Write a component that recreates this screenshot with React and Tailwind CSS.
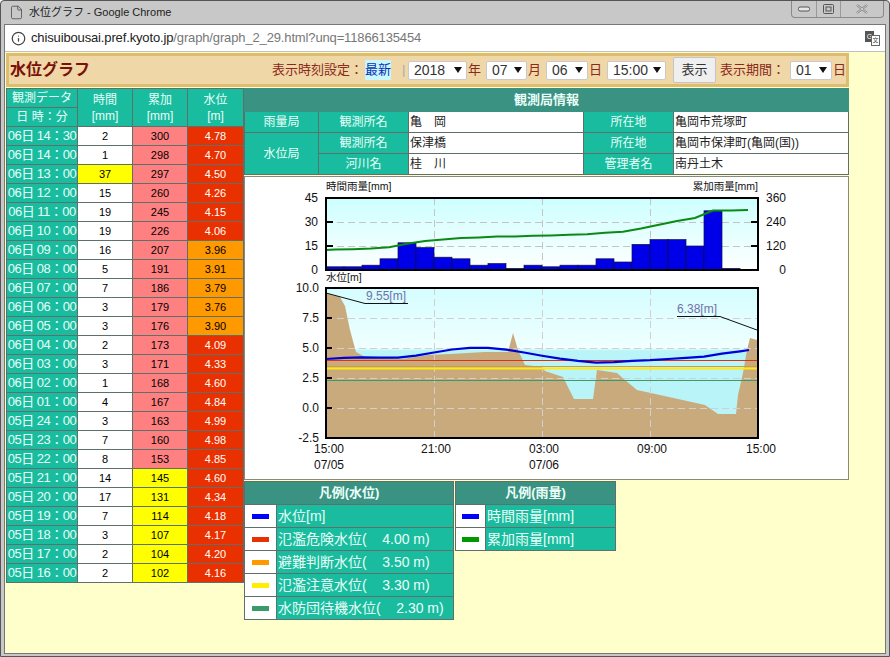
import React from "react";
import { File, Info } from "lucide-react";

const FONT = { fontFamily: '"Liberation Sans","Noto Sans CJK JP",sans-serif' };

const rows = [
  ["06日 14：30", 2, 300, "4.78"], ["06日 14：00", 1, 298, "4.70"], ["06日 13：00", 37, 297, "4.50"],
  ["06日 12：00", 15, 260, "4.26"], ["06日 11：00", 19, 245, "4.15"], ["06日 10：00", 19, 226, "4.06"],
  ["06日 09：00", 16, 207, "3.96"], ["06日 08：00", 5, 191, "3.91"], ["06日 07：00", 7, 186, "3.79"],
  ["06日 06：00", 3, 179, "3.76"], ["06日 05：00", 3, 176, "3.90"], ["06日 04：00", 2, 173, "4.09"],
  ["06日 03：00", 3, 171, "4.33"], ["06日 02：00", 1, 168, "4.60"], ["06日 01：00", 4, 167, "4.84"],
  ["05日 24：00", 3, 163, "4.99"], ["05日 23：00", 7, 160, "4.98"], ["05日 22：00", 8, 153, "4.85"],
  ["05日 21：00", 14, 145, "4.60"], ["05日 20：00", 17, 131, "4.34"], ["05日 19：00", 7, 114, "4.18"],
  ["05日 18：00", 3, 107, "4.17"], ["05日 17：00", 2, 104, "4.20"], ["05日 16：00", 2, 102, "4.16"],
];

const bars = [2, 2, 3, 7, 17, 14, 8, 7, 3, 4, 1, 3, 2, 3, 3, 7, 5, 16, 19, 19, 15, 37, 1];
const cum = [102, 104, 107, 114, 131, 145, 153, 160, 163, 167, 168, 171, 173, 176, 179, 186, 191, 207, 226, 245, 260, 297, 298];
const lvl = [4.16, 4.2, 4.17, 4.18, 4.34, 4.6, 4.85, 4.98, 4.99, 4.84, 4.6, 4.33, 4.09, 3.9, 3.76, 3.79, 3.91, 3.96, 4.06, 4.15, 4.26, 4.5, 4.7];

const cumPts =
  "326,250 " + cum.map((v, i) => `${335 + 18 * i},${270 - v * 0.2}`).join(" ") + " 748,210";
const lvlPts =
  "326,359 " + lvl.map((v, i) => `${344 + 18 * i},${437.7 - (v + 2.5) * 12}`).join(" ") + " 749,350";

const terrain =
  "326,438 326,293 340,297 345,306 350,330 356,352 365,357 402,359 428,355 450,354 485,352 508,352 513,333 518,350 525,365 542,367 545,371 563,377 574,399 593,399 597,370 617,373 625,380 637,390 678,399 705,405 718,414 736,414 738,395 743,373 747,350 750,338 757,340 757,438";

function Sel({ v, w }) {
  return (
    <div className={`${w} shrink-0 h-[19px] bg-white border border-[#c9c9c9] rounded-[2px] flex items-center justify-between pl-[5px] pr-[4px] text-[14px] text-[#333]`}>
      <span>{v}</span>
      <svg width="8" height="6" viewBox="0 0 8 6"><path d="M0 0h8L4 6z" fill="#111" /></svg>
    </div>
  );
}

const th = "border border-[#5f6f6a] bg-[#1abc9f] text-[#e8fff8] font-normal p-0 text-center leading-[16px]";
const tdw = "bg-white border border-[#5f6f6a] text-[#222] py-0 pl-[1px] leading-[16px]";

function LegendRow({ color, label }) {
  return (
    <tr className="h-[23px]">
      <td className="bg-white border border-[#5f6f6a] p-0">
        <div className={`${color} mx-auto w-[17px] h-[5px]`} />
      </td>
      <td className="border border-[#5f6f6a] bg-[#1abc9f] text-[#e8fff8] text-[14px] leading-[18px] pl-[1px] py-0 whitespace-pre">{label}</td>
    </tr>
  );
}

function Chart() {
  const T = ({ x, y, a = "end", s = 12, c = "#111", children }) => (
    <text x={x} y={y} textAnchor={a} fontSize={s} fill={c}>{children}</text>
  );
  return (
    <svg width="603" height="302" viewBox="245 177 603 302" className="block" style={FONT}>
      <defs>
        <linearGradient id="up" x1="0" y1="0" x2="0" y2="1">
          <stop offset="0" stopColor="#ccffff" />
          <stop offset="1" stopColor="#ffffff" />
        </linearGradient>
        <linearGradient id="lo" x1="0" y1="0" x2="0" y2="1">
          <stop offset="0" stopColor="#d4fdff" />
          <stop offset="0.4" stopColor="#f0ffff" />
          <stop offset="0.42" stopColor="#b8f4f8" />
          <stop offset="1" stopColor="#b8f4f8" />
        </linearGradient>
      </defs>

      <rect x="326" y="198" width="432" height="72" fill="url(#up)" />
      <g stroke="#c4c4c4" strokeDasharray="7 4" strokeWidth="1">
        <path d="M326 222.5H758M326 246.5H758M434.5 198V270M542.5 198V270M650.5 198V270" fill="none" />
      </g>
      {bars.map((v, i) => (
        <rect key={i} x={326 + 18 * i} y={270 - v * 1.6} width="18" height={v * 1.6} fill="#0000e8" stroke="#101040" strokeWidth="0.7" />
      ))}
      <polyline points={cumPts} fill="none" stroke="#0a8a12" strokeWidth="2" />
      <rect x="326" y="198" width="432" height="72" fill="none" stroke="#000" strokeWidth="2" />
      <path d="M327 222h6M327 246h6M757 222h-6M757 246h-6" stroke="#000" strokeWidth="2" />

      <rect x="326" y="288" width="432" height="150" fill="url(#lo)" />
      <polygon points={terrain} fill="#c9aa7c" />
      <g stroke="#d0d0d0" strokeDasharray="7 4" strokeWidth="1" fill="none">
        <path d="M326 318.5H758M326 348.5H758M326 378.5H758M326 408.5H758M434.5 288V438M542.5 288V438M650.5 288V438" />
      </g>
      <path d="M326 360.5H758" stroke="#e03010" strokeWidth="1" />
      <path d="M326 366.5H758" stroke="#c8a040" strokeWidth="1" />
      <path d="M326 368.5H758" stroke="#ffe81a" strokeWidth="2" />
      <path d="M326 380.5H758" stroke="#3a9a6a" strokeWidth="1" />
      <polyline points={lvlPts} fill="none" stroke="#0000d8" strokeWidth="2.2" />
      <rect x="326" y="288" width="432" height="150" fill="none" stroke="#000" strokeWidth="2" />
      <path d="M327 318h5M327 348h5M327 378h5M327 408h5" stroke="#000" strokeWidth="2" />

      <polyline points="326,293 365,303.5 408,303.5" fill="none" stroke="#111" strokeWidth="1" />
      <polyline points="677,316.5 720,316.5 757,330" fill="none" stroke="#111" strokeWidth="1" />
      <T x={366} y={300} a="start" c="#7272a8">9.55[m]</T>
      <T x={677} y={313} a="start" c="#7272a8">6.38[m]</T>

      <T x={326} y={190} a="start" s={10.5}>時間雨量[mm]</T>
      <T x={758} y={190} s={10.5}>累加雨量[mm]</T>
      <T x={326} y={281} a="start" s={10.5}>水位[m]</T>

      {[["45", 202], ["30", 226], ["15", 250], ["0", 274]].map(([t, y]) => <T key={t} x={318} y={y}>{t}</T>)}
      {[["360", 202], ["240", 226], ["120", 250], ["0", 274]].map(([t, y]) => <T key={t} x={786} y={y}>{t}</T>)}
      {[["10.0", 292], ["7.5", 322], ["5.0", 352], ["2.5", 382], ["0.0", 412], ["-2.5", 442]].map(([t, y]) => <T key={t} x={319} y={y}>{t}</T>)}
      {[["15:00", 329], ["21:00", 436], ["03:00", 544], ["09:00", 652], ["15:00", 761]].map(([t, x], i) => <T key={i} x={x} y={453} a="middle">{t}</T>)}
      <T x={329} y={469} a="middle">07/05</T>
      <T x={544} y={469} a="middle">07/06</T>
    </svg>
  );
}

export default function App() {
  return (
    <div className="w-[890px] h-[657px] flex flex-col overflow-hidden bg-[#c8c8c8] border border-[#555] rounded-t-[4px]" style={FONT}>
      <div className="h-[23px] flex items-start shrink-0 relative">
        <div className="flex items-center gap-[5px] pl-[8px] pt-[3px] text-[11px] text-[#222]">
          <File size={15} strokeWidth={1.2} className="text-[#444]" />
          <span>水位グラフ - Google Chrome</span>
        </div>
        <div className="ml-auto mr-[5px] flex h-[17px] border border-t-0 border-[#8a8a8a] rounded-b-[4px] text-[#555]">
          <div className="w-[25px] border-r border-[#9a9a9a] flex items-center justify-center">
            <svg width="12" height="6" viewBox="0 0 12 6"><rect x="0.5" y="1" width="11" height="4" rx="1.5" fill="#e8e8e8" stroke="#555" /></svg>
          </div>
          <div className="w-[24px] border-r border-[#9a9a9a] flex items-center justify-center">
            <svg width="11" height="10" viewBox="0 0 11 10"><rect x="0.5" y="0.5" width="10" height="9" rx="1" fill="none" stroke="#555" /><rect x="3" y="3" width="5" height="4" fill="none" stroke="#555" /></svg>
          </div>
          <div className="w-[42px] flex items-center justify-center">
            <svg width="12" height="10" viewBox="0 0 12 10"><path d="M1 1l10 8M11 1L1 9" stroke="#777" strokeWidth="2.2" fill="none" /><path d="M1 1l10 8M11 1L1 9" stroke="#eee" strokeWidth="0.8" fill="none" /></svg>
          </div>
        </div>
      </div>

      <div className="flex-1 flex flex-col min-h-0 mx-[3px] mb-[2px] border border-[#777]">
        <div className="h-[27px] shrink-0 bg-white border-b border-[#c0c0c0] flex items-center pl-[6px] pr-[5px] text-[13px] tracking-[-0.14px]">
          <Info size={15} strokeWidth={2} className="text-[#444] mr-[5px]" />
          <span className="text-[#222]">chisuibousai.pref.kyoto.jp</span>
          <span className="text-[#777]">/graph/graph_2_29.html?unq=11866135454</span>
          <div className="ml-auto relative w-[15px] h-[15px]">
            <div className="absolute left-0 top-0 w-[9px] h-[11px] bg-[#555] text-white text-[7px] leading-[11px] text-center">G</div>
            <div className="absolute right-0 bottom-0 w-[9px] h-[11px] bg-white border border-[#666] text-[#444] text-[6px] leading-[9px] text-center">文</div>
          </div>
        </div>

        <div className="flex-1 min-h-0 bg-[#ffffcc] pl-[1px] pt-[1px]">
          <div className="w-[843px] h-[34px] bg-[#efd7a8] border-[3px] border-[#dfbd70] flex items-center pl-[1px]">
            <span className="text-[16px] font-bold text-[#7a1208] whitespace-nowrap shrink-0">水位グラフ</span>
            <div className="ml-[182px] flex items-center text-[13px] text-[#8c2a1a] whitespace-nowrap shrink-0">
              <span className="w-[93px]">表示時刻設定：</span>
              <span className="bg-[#c8f8ff] text-[#0a30b0] w-[26px]">最新</span>
              <span className="text-[#aaa] ml-[11px] w-[6px]">|</span>
              <div className="flex items-center">
                <Sel v="2018" w="w-[59px]" /><span className="w-[19px] pl-[1px]">年</span>
                <Sel v="07" w="w-[41px]" /><span className="w-[19px] pl-[1px]">月</span>
                <Sel v="06" w="w-[42px]" /><span className="w-[19px] pl-[1px]">日</span>
                <Sel v="15:00" w="w-[59px]" />
              </div>
              <button className="ml-[7px] w-[43px] h-[26px] bg-[#efefef] border border-[#c4c4c4] rounded-[2px] text-[13px] text-[#333]">表示</button>
              <span className="ml-[4px] w-[70px]">表示期間：</span>
              <Sel v="01" w="w-[42px]" /><span className="pl-[1px]">日</span>
            </div>
          </div>

          <div className="flex items-start pt-[1px]">
            <table className="table-fixed border-collapse w-[237px] shrink-0 text-[11px]">
              <colgroup><col className="w-[71px]" /><col className="w-[55px]" /><col className="w-[55px]" /><col className="w-[56px]" /></colgroup>
              <thead>
                <tr className="h-[19px]">
                  <th className={`${th} text-[12px]`}>観測データ</th>
                  <th rowSpan={2} className={`${th} text-[12px]`}>時間<br />[mm]</th>
                  <th rowSpan={2} className={`${th} text-[12px]`}>累加<br />[mm]</th>
                  <th rowSpan={2} className={`${th} text-[12px]`}>水位<br />[m]</th>
                </tr>
                <tr className="h-[19px]"><th className={`${th} text-[12px]`}>日 時：分</th></tr>
              </thead>
              <tbody>
                {rows.map((r) => {
                  const level = parseFloat(r[3]);
                  return (
                    <tr key={r[0]} className="h-[19px]">
                      <td className="border border-[#5f6f6a] bg-[#1abc9f] text-[#e8fff8] text-[13px] tracking-[-0.5px] leading-[16px] p-0 text-center whitespace-nowrap">{r[0]}</td>
                      <td className={`border border-[#5f6f6a] text-center text-black p-0 leading-[16px] ${r[1] >= 30 ? "bg-[#ffff00]" : "bg-white"}`}>{r[1]}</td>
                      <td className={`border border-[#5f6f6a] text-center text-black p-0 leading-[16px] ${r[2] >= 150 ? "bg-[#ff8080]" : "bg-[#ffff00]"}`}>{r[2]}</td>
                      <td className={`border border-[#5f6f6a] text-center p-0 leading-[16px] ${level >= 4 ? "bg-[#e83000] text-white" : "bg-[#ff9900] text-black"}`}>{r[3]}</td>
                    </tr>
                  );
                })}
              </tbody>
            </table>

            <div className="flex flex-col">
              <table className="table-fixed border-collapse w-[604px] text-[12px]">
                <colgroup><col className="w-[74px]" /><col className="w-[90px]" /><col className="w-[175px]" /><col className="w-[90px]" /><col className="w-[175px]" /></colgroup>
                <thead>
                  <tr className="h-[23px]"><th colSpan={5} className="bg-[#3a9283] text-[#eafff8] text-[13px] font-bold border border-[#3a9283] p-0 leading-[18px]">観測局情報</th></tr>
                </thead>
                <tbody>
                  <tr className="h-[21px]">
                    <td className={th}>雨量局</td><td className={th}>観測所名</td>
                    <td className={tdw}>亀　岡</td>
                    <td className={th}>所在地</td>
                    <td className={tdw}>亀岡市荒塚町</td>
                  </tr>
                  <tr className="h-[21px]">
                    <td rowSpan={2} className={th}>水位局</td><td className={th}>観測所名</td>
                    <td className={tdw}>保津橋</td>
                    <td className={th}>所在地</td>
                    <td className={tdw}>亀岡市保津町(亀岡(国))</td>
                  </tr>
                  <tr className="h-[21px]">
                    <td className={th}>河川名</td>
                    <td className={tdw}>桂　川</td>
                    <td className={th}>管理者名</td>
                    <td className={tdw}>南丹土木</td>
                  </tr>
                </tbody>
              </table>

              <div className="mt-[1px] w-[605px] h-[304px] bg-white border border-[#8a8a78] overflow-hidden">
                <Chart />
              </div>

              <div className="flex items-start mt-[1px]">
                <table className="table-fixed border-collapse w-[210px]">
                  <colgroup><col className="w-[32px]" /><col /></colgroup>
                  <thead><tr className="h-[23px]"><th colSpan={2} className="bg-[#3a9283] text-[#eafff8] text-[13px] font-bold border border-[#5f6f6a] p-0 leading-[18px]">凡例(水位)</th></tr></thead>
                  <tbody>
                    <LegendRow color="bg-[#0000ff]" label="水位[m]" />
                    <LegendRow color="bg-[#e83000]" label="氾濫危険水位(    4.00 m)" />
                    <LegendRow color="bg-[#ff9900]" label="避難判断水位(    3.50 m)" />
                    <LegendRow color="bg-[#ffee00]" label="氾濫注意水位(    3.30 m)" />
                    <LegendRow color="bg-[#3a9a6a]" label="水防団待機水位(    2.30 m)" />
                  </tbody>
                </table>
                <table className="table-fixed border-collapse w-[161px] ml-[1px]">
                  <colgroup><col className="w-[30px]" /><col /></colgroup>
                  <thead><tr className="h-[23px]"><th colSpan={2} className="bg-[#3a9283] text-[#eafff8] text-[13px] font-bold border border-[#5f6f6a] p-0 leading-[18px]">凡例(雨量)</th></tr></thead>
                  <tbody>
                    <LegendRow color="bg-[#0000ff]" label="時間雨量[mm]" />
                    <LegendRow color="bg-[#009900]" label="累加雨量[mm]" />
                  </tbody>
                </table>
              </div>
            </div>
          </div>
        </div>
      </div>
    </div>
  );
}
